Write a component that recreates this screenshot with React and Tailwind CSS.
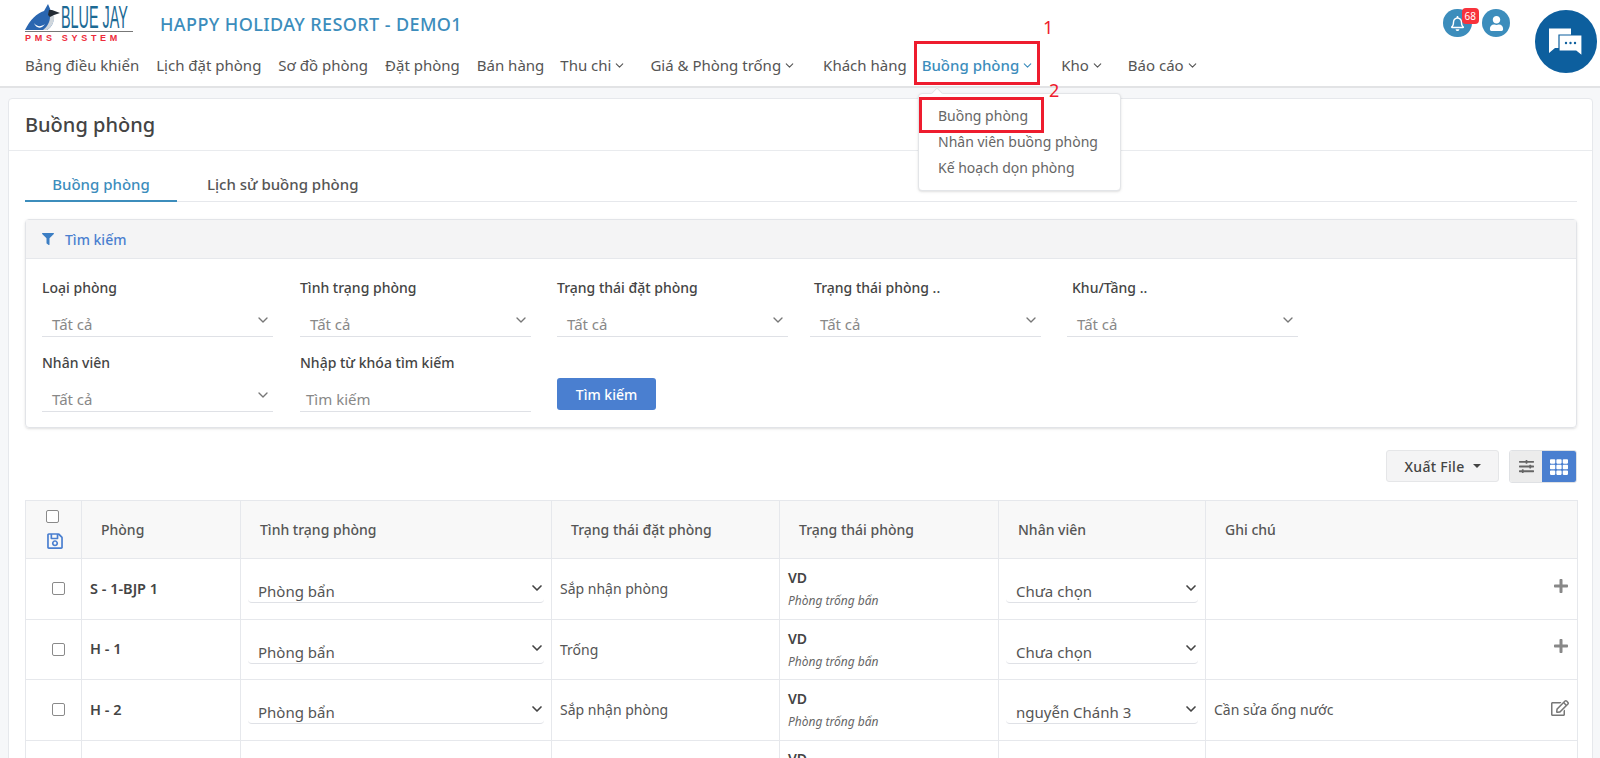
import { ChevronDown } from 'lucide-react';
import { FaFilter, FaRegSave, FaPlus, FaRegEdit, FaSlidersH, FaTh, FaRegBell, FaUser } from 'react-icons/fa';

const navItems = [
    { label: 'Bảng điều khiển', cls: 'ml-0' },
    { label: 'Lịch đặt phòng', cls: 'ml-[17px]' },
    { label: 'Sơ đồ phòng', cls: 'ml-[17px]' },
    { label: 'Đặt phòng', cls: 'ml-[17px]' },
    { label: 'Bán hàng', cls: 'ml-[17px]' },
    { label: 'Thu chi', cls: 'ml-[16px]', caret: true },
    { label: 'Giá & Phòng trống', cls: 'ml-[24px]', caret: true },
    { label: 'Khách hàng', cls: 'ml-[27px]' },
    { label: 'Buồng phòng', cls: 'ml-[15px]', caret: true, active: true },
    { label: 'Kho', cls: 'ml-[27px]', caret: true },
    { label: 'Báo cáo', cls: 'ml-[24px]', caret: true },
];

const rows = [
    { room: 'S - 1-BJP 1', booking: 'Sắp nhận phòng', staff: 'Chưa chọn', note: '' },
    { room: 'H - 1', booking: 'Trống', staff: 'Chưa chọn', note: '' },
    { room: 'H - 2', booking: 'Sắp nhận phòng', staff: 'nguyễn Chánh 3', note: 'Cần sửa ống nước' },
];

const FilterSelect = ({ label, labelCls = '' }) => (
    <div className="w-[231px]">
        <div className={`text-[14px] font-medium leading-[20px] text-[#444] ${labelCls}`}>{label}</div>
        <div className="mt-[12px] flex h-[27px] items-center justify-between border-b border-[#dfe1e6] pl-[10px] pr-[2px] pt-[2px] text-[15px] text-[#888]">
            <span>Tất cả</span>
            <ChevronDown className="mb-[8px] h-4 w-4 text-[#777]" />
        </div>
    </div>
);

const RowSelect = ({ value }) => (
    <div className="flex h-[29px] items-center justify-between rounded-b border-b border-[#dfe1e6] pl-[10px] text-[15px] text-[#555]">
        <span className="pt-[6px]">{value}</span>
        <ChevronDown className="-mr-[1px] mb-[1px] h-4 w-4 text-[#444]" strokeWidth={2.5} />
    </div>
);

const Checkbox = () => (
    <span className="block h-[13px] w-[13px] rounded-[2px] border border-[#8a8a8a] bg-white" />
);

const Logo = () => (
    <div className="w-[112px] pt-[3px]">
        <div className="flex h-[28px] items-end">
            <svg viewBox="0 0 35 28" className="h-[28px] w-[35px] shrink-0">
                <path d="M0 27 C5 17 12 10 19 8 L23 1 L26 8 L28 12 C30 18 27 24 22 27 Z" fill="#2a66b0" />
                <path d="M24 7 L27 7 L35 10 L29 12 L26 15 L23 12 Z" fill="#222a33" />
                <path d="M25 14 L29 12 C30 18 27 24 22 27 L18 27 C22 24 25 19 25 14 Z" fill="#cfd6dc" />
                <path d="M9 20 C12 24 16 24 20 21 C17 26 11 26 9 20 Z" fill="#ffffff" />
            </svg>
            <span className="ml-[1px] origin-left scale-x-[0.45] whitespace-nowrap font-['Liberation_Sans',sans-serif] text-[32px] leading-[27px] text-[#1c6a94]">
                BLUE JAY
            </span>
        </div>
        <div className="h-[1px] w-[108px] bg-[#777]" />
        <div className="mt-[1px] w-[108px] whitespace-nowrap font-['Liberation_Sans',sans-serif] text-[9px] font-bold leading-[11px] tracking-[3.7px] text-[#ee2b3b]">
            PMS SYSTEM
        </div>
    </div>
);

export default function App() {
    return (
        <div className="relative h-[758px] w-[1600px] overflow-hidden bg-[#f6f7f9] font-['Noto_Sans',sans-serif] text-[#555]">
            {/* header */}
            <header className="h-[88px] border-b-2 border-[#e2e3e5] bg-white pl-[25px]">
                <div className="flex h-[46px] items-start">
                    <Logo />
                    <div className="ml-[23px] pt-[9px] text-[18px] font-medium leading-[30px] tracking-[0.4px] text-[#3c8dbc]">
                        HAPPY HOLIDAY RESORT - DEMO1
                    </div>
                    <div className="ml-auto mr-[90px] mt-[9px] flex items-start gap-[10px]">
                        <div className="relative flex h-[28px] w-[29px] items-center justify-center rounded-full bg-[#3c8dbc]">
                            <FaRegBell className="h-[15px] w-[15px] text-white" />
                            <span className="absolute -right-[7px] -top-[1px] h-[16px] rounded-sm bg-[#f8333c] px-[3px] text-[10px] leading-[16px] text-white">68</span>
                        </div>
                        <div className="flex h-[28px] w-[28px] items-center justify-center rounded-full bg-[#3c8dbc]">
                            <FaUser className="h-[15px] w-[15px] text-white" />
                        </div>
                    </div>
                </div>
                <nav className="flex h-[38px] items-center text-[15px]">
                    {navItems.map(item => (
                        <span key={item.label} className={`flex items-center whitespace-nowrap ${item.cls} ${item.active ? 'font-medium text-[#3c8dbc]' : 'text-[#555]'}`}>
                            {item.label}
                            {item.caret && <ChevronDown className="ml-[2px] h-[13px] w-[13px]" />}
                        </span>
                    ))}
                </nav>
            </header>

            {/* main card */}
            <main className="ml-[8px] mr-[7px] mt-[10px] h-[700px] rounded-t border border-[#e6e8ec] bg-white">
                <div className="flex h-[52px] items-center border-b border-[#e9ebee] pl-[16px] text-[20px] font-medium text-[#444]">
                    Buồng phòng
                </div>

                <div className="pl-[16px] pr-[15px]">
                    <div className="mt-[21px] flex h-[30px] border-b border-[#e6e8ec] text-[15px] font-medium">
                        <div className="h-[30px] w-[152px] border-b-2 border-[#3c8dbc] text-center leading-[25px] text-[#3c8dbc]">Buồng phòng</div>
                        <div className="ml-[30px] leading-[25px] text-[#555]">Lịch sử buồng phòng</div>
                    </div>

                    {/* search panel */}
                    <section className="mt-[17px] h-[209px] rounded border border-[#e2e4e8] shadow-sm">
                        <div className="flex h-[39px] items-center border-b border-[#e6e8ec] bg-[#f4f4f5] pl-[16px] text-[14px] font-medium text-[#4a7fd0]">
                            <FaFilter className="mr-[11px] h-[12px] w-[12px] text-[#3c7ec4]" />
                            Tìm kiếm
                        </div>
                        <div className="px-[16px] pt-[19px]">
                            <div className="flex">
                                <FilterSelect label="Loại phòng" />
                                <div className="ml-[27px]"><FilterSelect label="Tình trạng phòng" /></div>
                                <div className="ml-[26px]"><FilterSelect label="Trạng thái đặt phòng" /></div>
                                <div className="ml-[22px]"><FilterSelect label="Trạng thái phòng .." labelCls="pl-[4px]" /></div>
                                <div className="ml-[26px]"><FilterSelect label="Khu/Tầng .." labelCls="pl-[5px]" /></div>
                            </div>
                            <div className="mt-[16px] flex items-end">
                                <FilterSelect label="Nhân viên" />
                                <div className="ml-[27px] w-[231px]">
                                    <div className="text-[14px] font-medium leading-[20px] text-[#444]">Nhập từ khóa tìm kiếm</div>
                                    <div className="mt-[12px] flex h-[27px] items-center border-b border-[#dfe1e6] pl-[6px] pt-[2px] text-[15px] text-[#888]">Tìm kiếm</div>
                                </div>
                                <button className="mb-[2px] ml-[26px] h-[32px] w-[99px] rounded-[3px] bg-[#4a7fd0] text-[14px] font-medium text-white">Tìm kiếm</button>
                            </div>
                        </div>
                    </section>

                    {/* toolbar */}
                    <div className="mt-[22px] flex h-[33px] justify-end">
                        <button className="flex h-[32px] w-[113px] items-center justify-center rounded-[3px] border border-[#e5e6e8] bg-[#f4f4f5] text-[14px] font-medium tracking-[0.3px] text-[#444]">
                            Xuất File
                            <span className="ml-[8px] h-0 w-0 border-x-[4px] border-t-[4px] border-x-transparent border-t-[#444]" />
                        </button>
                        <div className="ml-[10px] flex h-[33px] overflow-hidden rounded-[3px] border border-[#dfe1e4]">
                            <div className="flex w-[32px] items-center justify-center bg-[#ececec]">
                                <FaSlidersH className="h-[15px] w-[15px] text-[#666]" />
                            </div>
                            <div className="flex w-[34px] items-center justify-center bg-[#4a7fd0]">
                                <FaTh className="h-[18px] w-[18px] text-white" />
                            </div>
                        </div>
                    </div>

                    {/* table */}
                    <table className="mt-[17px] w-[1552px] table-fixed border-collapse text-[14px]">
                        <colgroup>
                            <col className="w-[56px]" />
                            <col className="w-[159px]" />
                            <col className="w-[311px]" />
                            <col className="w-[228px]" />
                            <col className="w-[219px]" />
                            <col className="w-[207px]" />
                            <col className="w-[372px]" />
                        </colgroup>
                        <thead>
                            <tr className="h-[58px] bg-[#f8f8f8] text-left font-medium text-[#555]">
                                <th className="border border-[#e6e8ec] pl-[20px] font-medium">
                                    <Checkbox />
                                    <FaRegSave className="mt-[9px] h-[18px] w-[18px] text-[#4a7fd0]" />
                                </th>
                                <th className="border border-[#e6e8ec] pl-[19px] font-medium">Phòng</th>
                                <th className="border border-[#e6e8ec] pl-[19px] font-medium">Tình trạng phòng</th>
                                <th className="border border-[#e6e8ec] pl-[19px] font-medium">Trạng thái đặt phòng</th>
                                <th className="border border-[#e6e8ec] pl-[19px] font-medium">Trạng thái phòng</th>
                                <th className="border border-[#e6e8ec] pl-[19px] font-medium">Nhân viên</th>
                                <th className="border border-[#e6e8ec] pl-[19px] font-medium">Ghi chú</th>
                            </tr>
                        </thead>
                        <tbody>
                            {rows.map(row => (
                                <tr key={row.room} className="h-[60.5px]">
                                    <td className="border border-[#e6e8ec] pl-[26px]"><Checkbox /></td>
                                    <td className="border border-[#e6e8ec] pl-[8px] text-[14.5px] font-semibold text-[#444]">{row.room}</td>
                                    <td className="border border-[#e6e8ec] px-[7px]"><RowSelect value="Phòng bẩn" /></td>
                                    <td className="border border-[#e6e8ec] pl-[8px]">{row.booking}</td>
                                    <td className="border border-[#e6e8ec] pl-[8px] pt-[2px] leading-[20px]">
                                        <div className="font-semibold text-[#444]">VD</div>
                                        <div className="mt-[3px] text-[12px] italic text-[#666]">Phòng trống bẩn</div>
                                    </td>
                                    <td className="border border-[#e6e8ec] px-[7px]"><RowSelect value={row.staff} /></td>
                                    <td className="border border-[#e6e8ec] pl-[8px] pr-[8px]">
                                        <div className="flex items-center justify-between">
                                            <span>{row.note}</span>
                                            {row.note
                                                ? <FaRegEdit className="mb-[4px] h-[18px] w-[18px] text-[#777]" />
                                                : <FaPlus className="mb-[6px] h-[16px] w-[16px] text-[#888]" />}
                                        </div>
                                    </td>
                                </tr>
                            ))}
                            <tr className="h-[60px]">
                                <td className="border border-[#e6e8ec]" />
                                <td className="border border-[#e6e8ec]" />
                                <td className="border border-[#e6e8ec]" />
                                <td className="border border-[#e6e8ec]" />
                                <td className="border border-[#e6e8ec] pl-[8px] pt-[8px] align-top font-semibold leading-[20px] text-[#444]">VD</td>
                                <td className="border border-[#e6e8ec]" />
                                <td className="border border-[#e6e8ec]" />
                            </tr>
                        </tbody>
                    </table>
                </div>
            </main>

            {/* dropdown menu */}
            <div className="absolute left-[918px] top-[93px] h-[98px] w-[203px] rounded-sm border border-[#e3e5e8] bg-white pl-[19px] pt-[9px] text-[14px] leading-[26px] text-[#666] shadow-sm">
                <div className="absolute -top-[5px] left-[14px] h-[8px] w-[8px] rotate-45 border-l border-t border-[#e3e5e8] bg-white" />
                <div>Buồng phòng</div>
                <div>Nhân viên buồng phòng</div>
                <div>Kế hoạch dọn phòng</div>
            </div>

            {/* red annotations */}
            <div className="absolute left-[914px] top-[41px] h-[44px] w-[126px] border-[3px] border-[#ee1c2e]" />
            <div className="absolute left-[919px] top-[97px] h-[36px] w-[125px] border-[3px] border-[#ee1c2e]" />
            <div className="absolute left-[1043px] top-[15px] text-[18px] leading-[24px] text-[#ee1c2e]">1</div>
            <div className="absolute left-[1049px] top-[78px] text-[18px] leading-[24px] text-[#ee1c2e]">2</div>

            {/* chat button */}
            <div className="absolute left-[1535px] top-[10px] flex h-[63px] w-[62px] items-center justify-center rounded-full bg-[#0d5f9e]">
                <svg viewBox="0 0 34 28" className="h-[28px] w-[34px]">
                    <path d="M0 0.5 H22 V20 H6 L0 25 Z" fill="#fff" />
                    <path d="M10 7 H33 V23 V28 L27 23 H10 Z" fill="#fff" stroke="#0d5f9e" strokeWidth="1.2" />
                    <circle cx="17" cy="15" r="1.2" fill="#0d5f9e" />
                    <circle cx="21.5" cy="15" r="1.2" fill="#0d5f9e" />
                    <circle cx="26" cy="15" r="1.2" fill="#0d5f9e" />
                </svg>
            </div>
        </div>
    );
}
